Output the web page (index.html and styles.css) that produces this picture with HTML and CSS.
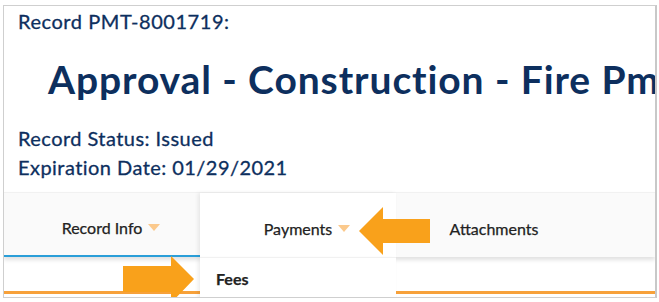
FILE: index.html
```html
<!DOCTYPE html>
<html lang="en">
<head>
  <meta charset="UTF-8">
  <title>Record PMT-8001719</title>
  <link rel="stylesheet" href="styles.css">
</head>
<body>
  <div class="frame">
    <div class="record-header">
      <div class="record-id">Record PMT-8001719:</div>
      <h1 class="record-title">Approval - Construction - Fire Pmt</h1>
      <div class="record-line status">Record Status: Issued</div>
      <div class="record-line">Expiration Date: 01/29/2021</div>
    </div>

    <div class="tab-bar">
      <div class="tab selected">Record Info <span class="caret"></span></div>
      <div class="tab open">
        Payments <span class="caret"></span>
        <div class="dropdown">
          <div class="dropdown-item">Fees</div>
        </div>
      </div>
      <div class="tab">Attachments</div>
    </div>

    <div class="below-tabs"></div>

    <svg class="callout arrow-right" width="72" height="48" viewBox="0 0 72 48">
      <polygon points="0,10 48,10 48,0 71,23 48,47 48,36 0,36" fill="#f9a11b"/>
    </svg>
    <svg class="callout arrow-left" width="72" height="48" viewBox="0 0 72 48">
      <polygon points="0,24 24,0 24,12 71,12 71,36 24,36 24,48" fill="#f9a11b"/>
    </svg>
  </div>
</body>
</html>
```

FILE: styles.css
```css
body {
  margin: 0;
  padding: 5px 0 0 3px;
  background-color: white;
  font-family: Lato, "Open Sans", sans-serif;
}

.frame {
  position: relative;
  width: 651px;
  height: 291px;
  border: 1px solid #cfcfcf;
  border-right: 2px solid #c8c8c8;
  overflow: hidden;
  background-color: white;
}

.record-header {
  padding-left: 14px;
  color: #0d2f5e;
  -webkit-text-stroke: 0.3px #0d2f5e;
}

.record-id {
  font-size: 20px;
  line-height: 24px;
  margin-top: 3px;
  letter-spacing: 0.55px;
}

.record-title {
  margin: 24px 0 0 30px;
  font-size: 39px;
  font-weight: 700;
  line-height: 44px;
  white-space: nowrap;
  letter-spacing: 0.9px;
  -webkit-text-stroke: 0;
}

.record-line {
  font-size: 20px;
  line-height: 29px;
  letter-spacing: 0.45px;
}

.record-line.status {
  margin-top: 23px;
}

.tab-bar {
  display: flex;
  height: 64px;
  margin-top: 10px;
  background-color: #fafafa;
  border-top: 1px solid #f1f1f1;
  box-shadow: 0 3px 4px rgba(0,0,0,0.12);
}

.tab {
  position: relative;
  width: 196px;
  display: flex;
  align-items: center;
  justify-content: center;
  padding-top: 6px;
  box-sizing: border-box;
  font-size: 16px;
  color: #222;
  -webkit-text-stroke: 0.25px #222;
}

.tab.selected {
  border-bottom: 2px solid #2a9ed8;
}

.tab.open {
  background-color: white;
  z-index: 2;
  box-shadow: -2px 0 4px rgba(0,0,0,0.08);
}

.caret {
  display: inline-block;
  width: 0;
  height: 0;
  margin-left: 6px;
  margin-right: -18px;
  border-left: 6px solid transparent;
  border-right: 6px solid transparent;
  border-top: 7px solid #fbc98c;
  -webkit-text-stroke: 0;
}

.dropdown {
  position: absolute;
  left: 0;
  right: 0;
  top: 64px;
  height: 45px;
  background-color: white;
  border-top: 1px solid #f1f1f1;
  box-shadow: -2px 2px 4px rgba(0,0,0,0.08);
}

.dropdown-item {
  padding: 11px 0 0 16px;
  font-size: 16px;
  font-weight: 700;
  color: #222;
}

.below-tabs {
  height: 34px;
  border-bottom: 3px solid #f7a13a;
}

.callout {
  position: absolute;
  z-index: 3;
}

.arrow-right {
  left: 119px;
  top: 250px;
}

.arrow-left {
  left: 355px;
  top: 201px;
}
```
